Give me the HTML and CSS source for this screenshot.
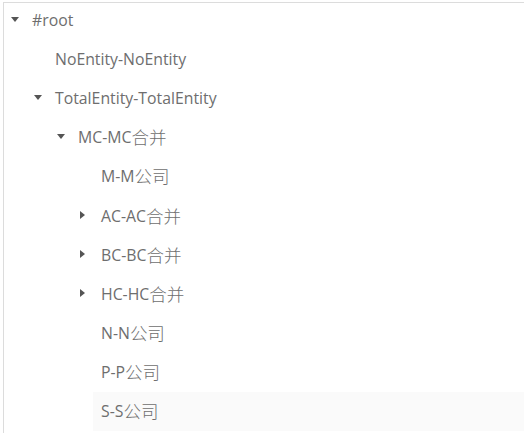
FILE: index.html
```html
<!DOCTYPE html>
<html>
<head>
<meta charset="utf-8">
<link rel="stylesheet" href="styles.css">
</head>
<body>
<div class="tree">
  <div class="row l0"><span class="sw down"></span><span class="label">#root</span></div>
  <div class="row l1"><span class="sw"></span><span class="label">NoEntity-NoEntity</span></div>
  <div class="row l1"><span class="sw down"></span><span class="label">TotalEntity-TotalEntity</span></div>
  <div class="row l2"><span class="sw down"></span><span class="label">MC-MC<span class="cjk">合并</span></span></div>
  <div class="row l3"><span class="sw"></span><span class="label">M-M<span class="cjk">公司</span></span></div>
  <div class="row l3"><span class="sw right"></span><span class="label">AC-AC<span class="cjk">合并</span></span></div>
  <div class="row l3"><span class="sw right"></span><span class="label">BC-BC<span class="cjk">合并</span></span></div>
  <div class="row l3"><span class="sw right"></span><span class="label">HC-HC<span class="cjk">合并</span></span></div>
  <div class="row l3"><span class="sw"></span><span class="label">N-N<span class="cjk">公司</span></span></div>
  <div class="row l3"><span class="sw"></span><span class="label">P-P<span class="cjk">公司</span></span></div>
  <div class="row l3 hover"><span class="sw"></span><span class="label">S-S<span class="cjk">公司</span></span></div>
</div>
</body>
</html>
```
FILE: styles.css
```css
html, body {
  margin: 0;
  padding: 0;
  background: #fff;
  overflow: hidden;
}
.tree {
  margin: 2px 0 0 3px;
  width: 540px;
  height: 440px;
  border-top: 1px solid #dcdcdc;
  border-left: 1px solid #dcdcdc;
  font-family: "Open Sans", "Noto Sans CJK SC", sans-serif;
  font-size: 15.8px;
  color: #6e6e6e;
  box-sizing: border-box;
}
.row {
  display: flex;
  align-items: center;
  height: 39.2px;
}
.row:first-child {
  margin-top: -3px;
}
.l0 { padding-left: 4px; }
.l1 { padding-left: 27px; }
.l2 { padding-left: 50px; }
.l3 { padding-left: 73px; }
.sw {
  width: 24px;
  height: 20px;
  flex: none;
  position: relative;
}
.sw.down::before {
  content: "";
  position: absolute;
  left: 3px;
  top: 7px;
  border-left: 4.5px solid transparent;
  border-right: 4.5px solid transparent;
  border-top: 5px solid #555;
}
.sw.right::before {
  content: "";
  position: absolute;
  left: 3px;
  top: 5px;
  border-top: 4.5px solid transparent;
  border-bottom: 4.5px solid transparent;
  border-left: 5.5px solid #555;
}
.label {
  white-space: nowrap;
  line-height: 22px;
}
.cjk {
  font-family: "Noto Sans CJK SC", sans-serif;
  font-size: 17.5px;
  font-weight: 300;
  line-height: 0;
  vertical-align: -1px;
}
.hover {
  background: linear-gradient(to right, transparent 89px, #fafafa 89px);
}
```
